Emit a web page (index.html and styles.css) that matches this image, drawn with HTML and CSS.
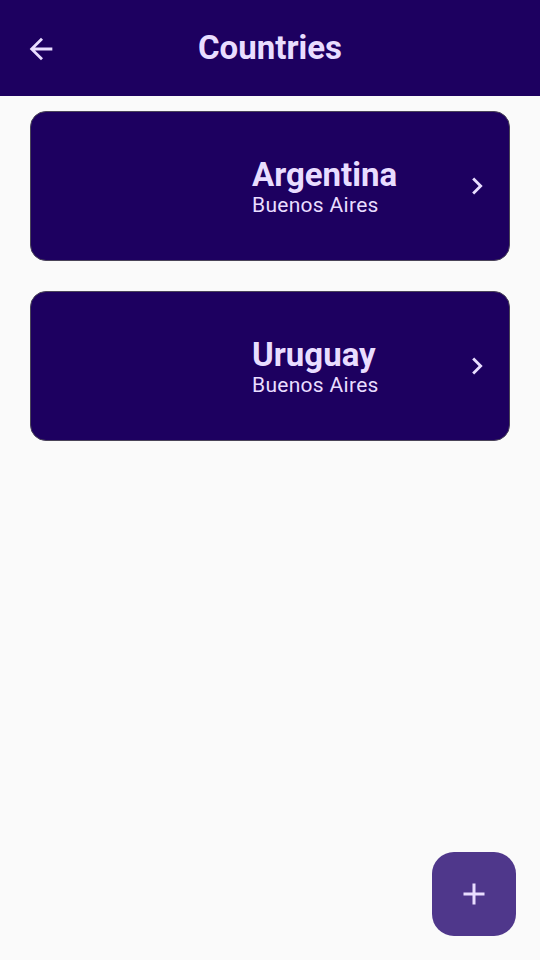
FILE: index.html
```html
<!DOCTYPE html>
<html>
<head>
<meta charset="utf-8">
<link rel="stylesheet" href="styles.css">
</head>
<body>
<div class="app">
  <header class="topbar">
    <button class="back" aria-label="Back">
      <svg width="34" height="34" viewBox="0 0 24 24"><path d="M20 11H7.83l5.59-5.59L12 4l-8 8 8 8 1.41-1.41L7.83 13H20v-2z" fill="#e9ddff"/></svg>
    </button>
    <h1 class="title">Countries</h1>
  </header>
  <main class="list">
    <div class="card">
      <div class="card-text">
        <div class="name">Argentina</div>
        <div class="capital">Buenos Aires</div>
      </div>
      <svg class="chev" width="34" height="34" viewBox="0 0 24 24"><path d="M10 6L8.59 7.41 13.17 12l-4.58 4.59L10 18l6-6z" fill="#e9ddff"/></svg>
    </div>
    <div class="card">
      <div class="card-text">
        <div class="name">Uruguay</div>
        <div class="capital">Buenos Aires</div>
      </div>
      <svg class="chev" width="34" height="34" viewBox="0 0 24 24"><path d="M10 6L8.59 7.41 13.17 12l-4.58 4.59L10 18l6-6z" fill="#e9ddff"/></svg>
    </div>
  </main>
  <button class="fab" aria-label="Add">
    <svg width="36" height="36" viewBox="0 0 24 24"><path d="M19 13h-6v6h-2v-6H5v-2h6V5h2v6h6v2z" fill="#e9ddff"/></svg>
  </button>
</div>
</body>
</html>
```
FILE: styles.css
```css
* { box-sizing: border-box; }
html, body { margin: 0; padding: 0; }
body {
  background: #fafafa;
  font-family: Roboto, "Noto Sans", sans-serif;
  width: 540px;
  height: 960px;
  overflow: hidden;
}
.app {
  position: relative;
  width: 540px;
  height: 960px;
}
.topbar {
  height: 96px;
  background: #1d0060;
  display: flex;
  align-items: center;
  position: relative;
}
.back {
  background: none;
  border: 0;
  padding: 0;
  margin-left: 24px;
  margin-top: 2px;
  width: 34px;
  height: 34px;
  display: flex;
}
.title {
  position: absolute;
  left: 0;
  right: 0;
  top: 0;
  margin: 0;
  text-align: center;
  line-height: 96px;
  font-size: 33px;
  font-weight: 700;
  color: #e9ddff;
  pointer-events: none;
}
.list {
  display: flex;
  flex-direction: column;
  gap: 30px;
  padding: 15px 30px;
}
.card {
  height: 150px;
  background: #1d0060;
  border: 1px solid #4a4458;
  border-radius: 16px;
  display: flex;
  align-items: center;
  padding-left: 221px;
  padding-right: 15px;
}
.card-text {
  flex: 1;
  color: #e9ddff;
  padding-top: 2px;
}
.name {
  font-size: 33px;
  font-weight: 700;
  line-height: 36px;
}
.capital {
  font-size: 21px;
  line-height: 24px;
  letter-spacing: 0.3px;
}
.chev { display: block; }
.fab {
  position: absolute;
  right: 24px;
  bottom: 24px;
  width: 84px;
  height: 84px;
  border: 0;
  border-radius: 22px;
  background: #4f378b;
  display: flex;
  align-items: center;
  justify-content: center;
}
```
